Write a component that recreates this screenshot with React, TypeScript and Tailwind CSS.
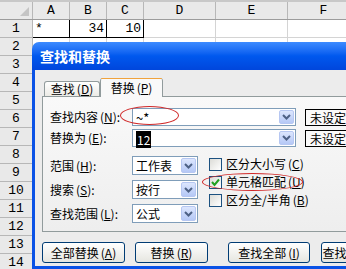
import React from "react";

const COLS = [
  { label: "A", w: "w-[37px]" },
  { label: "B", w: "w-[37px]" },
  { label: "C", w: "w-[37px]" },
  { label: "D", w: "w-[72px]" },
  { label: "E", w: "w-[72px]" },
  { label: "F", w: "w-[72px]" },
];

const ROWS = Array.from({ length: 14 }, (_, i) => i + 1);

function Chevron() {
  return (
    <svg width="9" height="6" viewBox="0 0 9 6">
      <polyline points="1,1 4.5,4.5 8,1" fill="none" stroke="#4d6185" strokeWidth="2" />
    </svg>
  );
}

function DropBtn() {
  return (
    <div className="flex h-full w-[15px] items-center justify-center rounded-[2px] border border-[#b6c7f2] bg-gradient-to-b from-[#dce6fd] to-[#b5c8f6]">
      <Chevron />
    </div>
  );
}

function Key({ k }: { k: string }) {
  return (
    <span className="ml-[2px]">
      (<span className="underline">{k}</span>)
    </span>
  );
}

function Select({ value }: { value: string }) {
  return (
    <div className="flex h-[19px] w-[66px] items-stretch border border-[#7f9db9] bg-white p-[1px]">
      <span className="flex-1 pl-[2px] leading-[15px]">{value}</span>
      <DropBtn />
    </div>
  );
}

function Check({ checked, text, k }: { checked?: boolean; text: string; k: string }) {
  return (
    <div className="flex h-[18px] items-center">
      <div className="flex h-[13px] w-[13px] items-center justify-center border border-[#1c5180] bg-gradient-to-br from-[#dcdcd7] to-white">
        {checked && (
          <svg width="9" height="9" viewBox="0 0 9 9">
            <polyline points="1,4 3.5,7 8,1.5" fill="none" stroke="#21a121" strokeWidth="2" />
          </svg>
        )}
      </div>
      <span className="ml-[4px]">
        {text}
        <Key k={k} />
      </span>
    </div>
  );
}

function Btn({ w, ml, children }: { w: string; ml: string; children: React.ReactNode }) {
  return (
    <div
      className={`${w} ${ml} flex h-[21px] shrink-0 items-center justify-center rounded-[3px] border border-[#003c74] bg-gradient-to-b from-white to-[#e6e6e0]`}
    >
      {children}
    </div>
  );
}

export default function App() {
  return (
    <div className="relative h-[269px] w-[346px] overflow-hidden bg-white font-['Liberation_Mono','Noto_Sans_CJK_SC',monospace] text-[13px] text-black">
      {/* column header */}
      <div className="flex h-[20px] border-b border-t-2 border-b-[#9c9c9c] border-t-[#c8c8c8] bg-[#e9e9e9]">
        <div className="relative w-[33px] shrink-0 border-r border-[#b7b7b7]">
          <div className="absolute bottom-[3px] right-[3px] h-0 w-0 border-b-[9px] border-l-[9px] border-b-[#c4c4c4] border-l-transparent" />
        </div>
        {COLS.map((c) => (
          <div key={c.label} className={`${c.w} shrink-0 border-r border-[#b7b7b7] text-center leading-[18px]`}>
            {c.label}
          </div>
        ))}
      </div>

      {ROWS.map((n) => (
        <div key={n} className="flex h-[18px]">
          <div className="w-[33px] shrink-0 border-b border-r border-[#b7b7b7] bg-[#e9e9e9] text-center leading-[17px]">
            {n}
          </div>
          {COLS.map((c, i) => {
            const hot = n === 1 && i < 3;
            return (
              <div
                key={c.label}
                className={`${c.w} shrink-0 border-b border-r px-[2px] leading-[17px] ${
                  hot ? "border-black" : "border-[#d4d4d4]"
                } ${i === 0 ? "text-left" : "text-right"}`}
              >
                {n === 1 && i === 0 && "*"}
                {n === 1 && i === 1 && "34"}
                {n === 1 && i === 2 && "10"}
              </div>
            );
          })}
        </div>
      ))}

      {/* dialog */}
      <div className="absolute left-[32px] top-[42px] flex h-[227px] w-[330px] flex-col overflow-hidden rounded-tl-[7px] font-['Noto_Sans_CJK_SC',sans-serif] text-[12px]">
        <div className="flex h-[28px] shrink-0 items-center bg-gradient-to-b from-[#3d8bff] via-[#0058ee] to-[#0046dc] pl-[8px] text-[14px] font-bold text-white">
          查找和替换
        </div>
        <div className="flex-1 border-b-[3px] border-l-[3px] border-[#0a52e6] bg-[#ececec] pl-[7px] pt-[8px]">
          {/* tabs */}
          <div className="relative z-10 flex h-[18px] items-end pl-[2px]">
            <div className="flex h-[15px] w-[56px] items-center justify-center rounded-t-[3px] border border-b-0 border-[#919b9c] bg-gradient-to-b from-white to-[#ecebe6]">
              查找<Key k="D" />
            </div>
            <div className="-mb-px flex h-[19px] w-[63px] flex-col rounded-t-[3px] border-x border-[#919b9c] bg-[#f9f9f9]">
              <div className="h-[3px] rounded-t-[3px] bg-[#f0a33d]" />
              <div className="flex flex-1 items-center justify-center">
                替换<Key k="P" />
              </div>
            </div>
          </div>

          {/* panel */}
          <div className="h-[136px] border border-[#919b9c] bg-gradient-to-b from-[#f9f9f9] to-[#eeeeee] pl-[7px] pt-[11px]">
            <div className="flex flex-col gap-[3px]">
              <div className="flex h-[18px] items-center">
                <span className="w-[82px] shrink-0">
                  查找内容<Key k="N" />:
                </span>
                <div className="flex h-[18px] w-[164px] shrink-0 items-stretch border border-[#7f9db9] bg-white p-[1px]">
                  <span className="flex-1 pl-[2px] text-[13px] leading-[15px]">~*</span>
                  <DropBtn />
                </div>
                <div className="ml-[9px] h-[17px] w-[60px] shrink-0 overflow-hidden whitespace-nowrap border border-black bg-[#fafafa] pl-[4px] leading-[15px]">
                  未设定格式
                </div>
              </div>
              <div className="flex h-[18px] items-center">
                <span className="w-[82px] shrink-0">
                  替换为<Key k="E" />:
                </span>
                <div className="flex h-[18px] w-[164px] shrink-0 items-stretch border border-[#7f9db9] bg-white p-[1px]">
                  <span className="flex-1 pl-[2px]">
                    <span className="bg-black px-[1px] leading-[14px] text-white">12</span>
                  </span>
                  <DropBtn />
                </div>
                <div className="ml-[9px] h-[17px] w-[60px] shrink-0 overflow-hidden whitespace-nowrap border border-black bg-[#fafafa] pl-[4px] leading-[15px]">
                  未设定格式
                </div>
              </div>
            </div>

            <div className="mt-[9px] flex">
              <div className="flex flex-col gap-[5px]">
                <div className="flex items-center">
                  <span className="w-[82px]">
                    范围<Key k="H" />:
                  </span>
                  <Select value="工作表" />
                </div>
                <div className="flex items-center">
                  <span className="w-[82px]">
                    搜索<Key k="S" />:
                  </span>
                  <Select value="按行" />
                </div>
                <div className="flex items-center">
                  <span className="w-[82px]">
                    查找范围<Key k="L" />:
                  </span>
                  <Select value="公式" />
                </div>
              </div>
              <div className="-mt-[1px] ml-[11px] flex flex-col">
                <Check text="区分大小写" k="C" />
                <Check checked text="单元格匹配" k="U" />
                <Check text="区分全/半角" k="B" />
              </div>
            </div>
          </div>

          {/* buttons */}
          <div className="mt-[10px] flex">
            <Btn w="w-[83px]" ml="ml-0">
              全部替换<Key k="A" />
            </Btn>
            <Btn w="w-[73px]" ml="ml-[10px]">
              替换<Key k="R" />
            </Btn>
            <Btn w="w-[82px]" ml="ml-[20px]">
              查找全部<Key k="I" />
            </Btn>
            <Btn w="w-[80px]" ml="ml-[11px]">
              查找下一个<Key k="F" />
            </Btn>
          </div>
        </div>
      </div>

      {/* red annotation ellipses */}
      <div className="absolute left-[120px] top-[106px] h-[19px] w-[59px] rounded-[50%] border-[1.5px] border-[#d02828]" />
      <div className="absolute left-[202px] top-[173px] h-[18px] w-[101px] rounded-[50%] border-[1.5px] border-[#d02828]" />
    </div>
  );
}
